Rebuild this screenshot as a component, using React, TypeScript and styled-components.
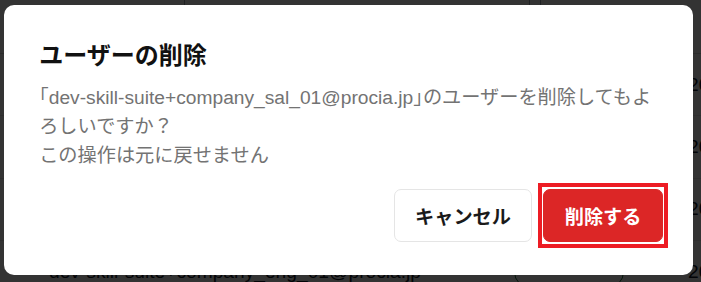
import styled, { createGlobalStyle } from 'styled-components'

const GlobalStyle = createGlobalStyle`
  html, body {
    margin: 0;
    padding: 0;
    background: #ffffff;
  }
  body {
    font-family: "Liberation Sans", "Noto Sans CJK JP", sans-serif;
  }
  * {
    box-sizing: border-box;
  }
`

const Page = styled.div`
  position: relative;
  width: 701px;
  height: 282px;
  overflow: hidden;
  background: #ffffff;
`

const Table = styled.div`
  display: flex;
  flex-direction: column;
`

const HeaderRow = styled.div`
  display: grid;
  grid-template-columns: 185px 345px 11px 1fr;
  height: 54px;
  border-bottom: 1px solid #d4d4d4;

  & > div {
    border-right: 1px solid #9ca3af;
  }
`

const Row = styled.div`
  display: grid;
  grid-template-columns: 514px 174px 1fr;
  align-items: center;
  height: 62.4px;
  border-bottom: 1px solid #e5e5e5;
  font-size: 19.2px;
  color: #111827;
  white-space: nowrap;
`

const EmailCell = styled.div`
  padding-left: 49px;
`

const RoleCell = styled.div`
  display: flex;
`

const RolePill = styled.span`
  display: inline-block;
  width: 110px;
  height: 32px;
  border: 1.5px solid #166534;
  border-radius: 16px;
`

const DateCell = styled.div``

const Overlay = styled.div`
  position: absolute;
  inset: 0;
  background: rgba(0, 0, 0, 0.8);
`

const Dialog = styled.div`
  position: absolute;
  top: 5px;
  left: 4px;
  width: 689px;
  padding: 35px 30px 33px 35.2px;
  background: #ffffff;
  border-radius: 10px;
  display: flex;
  flex-direction: column;
`

const Title = styled.h2`
  margin: 0;
  font-size: 24px;
  line-height: 32px;
  font-weight: 700;
  color: #111111;
`

const Message = styled.p`
  margin: 10px 0 0;
  font-size: 19.2px;
  line-height: 28.8px;
  color: #737373;
`

const Bracket = styled.span`
  font-family: "Noto Sans CJK JP", sans-serif;
  font-feature-settings: "halt";
`

const Footer = styled.div`
  display: flex;
  justify-content: flex-end;
  gap: 10.8px;
  margin-top: 19px;
`

const Button = styled.button<{ $danger?: boolean }>`
  position: relative;
  height: 52.8px;
  padding: 0 20.5px;
  border-radius: 7px;
  border: 1px solid ${p => (p.$danger ? '#dc2626' : '#e5e5e5')};
  background: ${p => (p.$danger ? '#dc2626' : '#ffffff')};
  color: ${p => (p.$danger ? '#ffffff' : '#1a1a1a')};
  font-family: "Liberation Sans", "Noto Sans CJK JP", sans-serif;
  font-size: 19.2px;
  font-weight: 700;
  cursor: pointer;
  outline: none;

  &::after {
    content: '';
    display: ${p => (p.$danger ? 'block' : 'none')};
    position: absolute;
    inset: -7px -6px;
    border: 4.5px solid #ed1c24;
    pointer-events: none;
  }
`

const rows = [
  { email: 'dev-skill-suite+company_adm_01@procia.jp', date: '2025/01/10' },
  { email: 'dev-skill-suite+company_sal_01@procia.jp', date: '2025/01/10' },
  { email: 'dev-skill-suite+company_mgr_01@procia.jp', date: '2025/01/10' },
  { email: 'dev-skill-suite+company_eng_01@procia.jp', date: '2025/01/10' },
]

export default function App() {
  return (
    <>
      <GlobalStyle />
      <Page>
        <Table>
          <HeaderRow>
            <div />
            <div />
            <div />
          </HeaderRow>
          {rows.map(r => (
            <Row key={r.email}>
              <EmailCell>{r.email}</EmailCell>
              <RoleCell>
                <RolePill />
              </RoleCell>
              <DateCell>{r.date}</DateCell>
            </Row>
          ))}
        </Table>
        <Overlay />
        <Dialog role="dialog" aria-modal="true">
          <Title>ユーザーの削除</Title>
          <Message>
            <Bracket>「</Bracket>dev-skill-suite+company_sal_01@procia.jp<Bracket>」</Bracket>のユーザーを削除してもよろしいですか？
            <br />
            この操作は元に戻せません
          </Message>
          <Footer>
            <Button>キャンセル</Button>
            <Button $danger>削除する</Button>
          </Footer>
        </Dialog>
      </Page>
    </>
  )
}
